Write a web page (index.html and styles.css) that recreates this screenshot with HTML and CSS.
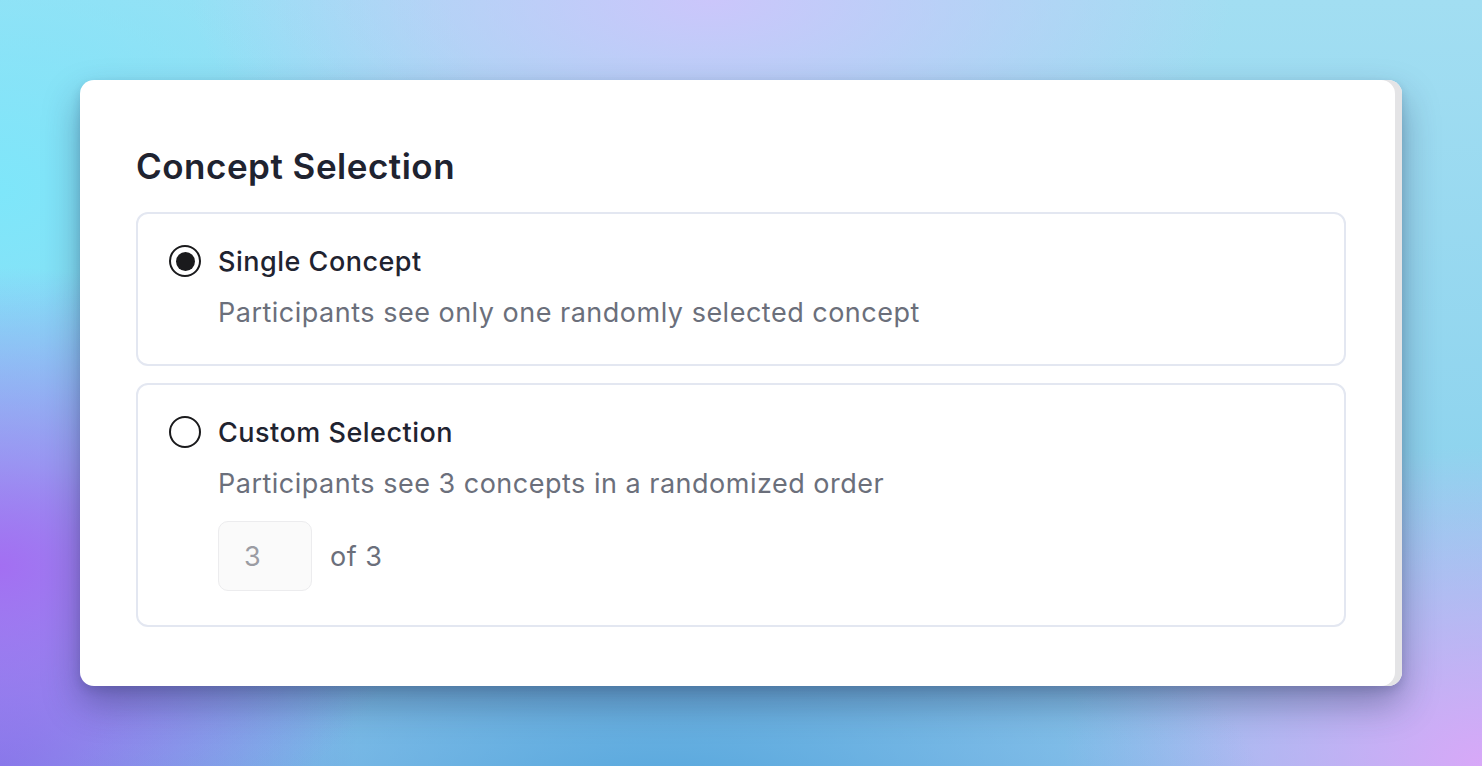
FILE: index.html
```html
<!DOCTYPE html>
<html lang="en">
<head>
    <meta charset="UTF-8">
    <meta name="viewport" content="width=device-width, initial-scale=1.0">
    <title>Concept Selection</title>
    <link rel="stylesheet" href="styles.css">
</head>
<body>
    <div class="panel">
        <h2 class="panel-title">Concept Selection</h2>

        <label class="option">
            <div class="option-head">
                <input type="radio" name="mode" class="radio" checked>
                <span class="option-label">Single Concept</span>
            </div>
            <p class="option-desc">Participants see only one randomly selected concept</p>
        </label>

        <label class="option">
            <div class="option-head">
                <input type="radio" name="mode" class="radio">
                <span class="option-label">Custom Selection</span>
            </div>
            <p class="option-desc">Participants see 3 concepts in a randomized order</p>
            <div class="count-row">
                <input type="text" class="count-input" value="3" disabled>
                <span class="count-total">of 3</span>
            </div>
        </label>
    </div>
</body>
</html>
```

FILE: styles.css
```css
html, body {
    height: 100%;
}

body {
    margin: 0;
    padding: 80px;
    box-sizing: border-box;
    font-family: 'Inter', 'Noto Sans', sans-serif;
    color: #1f2330;
    background:
        radial-gradient(ellipse 420px 300px at 0% 74%, #a36ff2 0%, rgba(163, 111, 242, 0) 100%),
        radial-gradient(ellipse 600px 260px at 45% 105%, #55a6dc 0%, rgba(85, 166, 220, 0) 100%),
        radial-gradient(ellipse 420px 320px at 100% 100%, #d8a8f8 0%, rgba(216, 168, 248, 0) 100%),
        radial-gradient(ellipse 360px 300px at 0% 100%, #7c7ce6 0%, rgba(124, 124, 230, 0) 100%),
        radial-gradient(ellipse 520px 220px at 48% 0%, #cbc6fb 0%, rgba(203, 198, 251, 0) 100%),
        radial-gradient(ellipse 500px 420px at 0% 25%, #7ee6fa 0%, rgba(126, 230, 250, 0) 100%),
        linear-gradient(180deg, #a2def2 0%, #8fd4ee 60%, #90c4ec 100%);
}

.panel {
    background: #fff;
    border-radius: 14px;
    padding: 64px 56px 59px;
    box-shadow:
        inset -7px 0 0 #e4e4e6,
        0 18px 36px rgba(30, 40, 80, 0.38),
        0 4px 10px rgba(30, 40, 80, 0.15);
}

.panel-title {
    margin: 0 0 24px;
    font-size: 35px;
    line-height: 44px;
    font-weight: 600;
    color: #1f2330;
    letter-spacing: 0.5px;
}

.option {
    display: block;
    border: 2px solid #e3e7f1;
    border-radius: 12px;
    padding: 30px 31px 34px;
    cursor: pointer;
}

.option + .option {
    margin-top: 17px;
}

.option-head {
    display: flex;
    align-items: center;
    gap: 17px;
    height: 34px;
}

.radio {
    appearance: none;
    -webkit-appearance: none;
    margin: 0;
    width: 32px;
    height: 32px;
    border: 2px solid #1a1a1c;
    border-radius: 50%;
    box-sizing: border-box;
    display: grid;
    place-items: center;
    flex-shrink: 0;
}

.radio:checked::after {
    content: "";
    width: 19px;
    height: 19px;
    border-radius: 50%;
    background: #1a1a1c;
}

.option-label {
    font-size: 27px;
    font-weight: 500;
    letter-spacing: 0.5px;
    color: #1f2330;
}

.option-desc {
    margin: 18px 0 0 49px;
    font-size: 27px;
    line-height: 34px;
    letter-spacing: 0.5px;
    color: #6b6f7b;
}

.count-row {
    display: flex;
    align-items: center;
    gap: 18px;
    margin: 20px 0 0 49px;
}

.count-input {
    width: 94px;
    height: 70px;
    box-sizing: border-box;
    border: 1.5px solid #ececee;
    border-radius: 10px;
    background: #fafafa;
    padding: 0 0 0 25px;
    font-family: inherit;
    font-size: 27px;
    color: #9b9ca3;
}

.count-total {
    font-size: 27px;
    letter-spacing: 0.5px;
    color: #6b6f7b;
}
```
